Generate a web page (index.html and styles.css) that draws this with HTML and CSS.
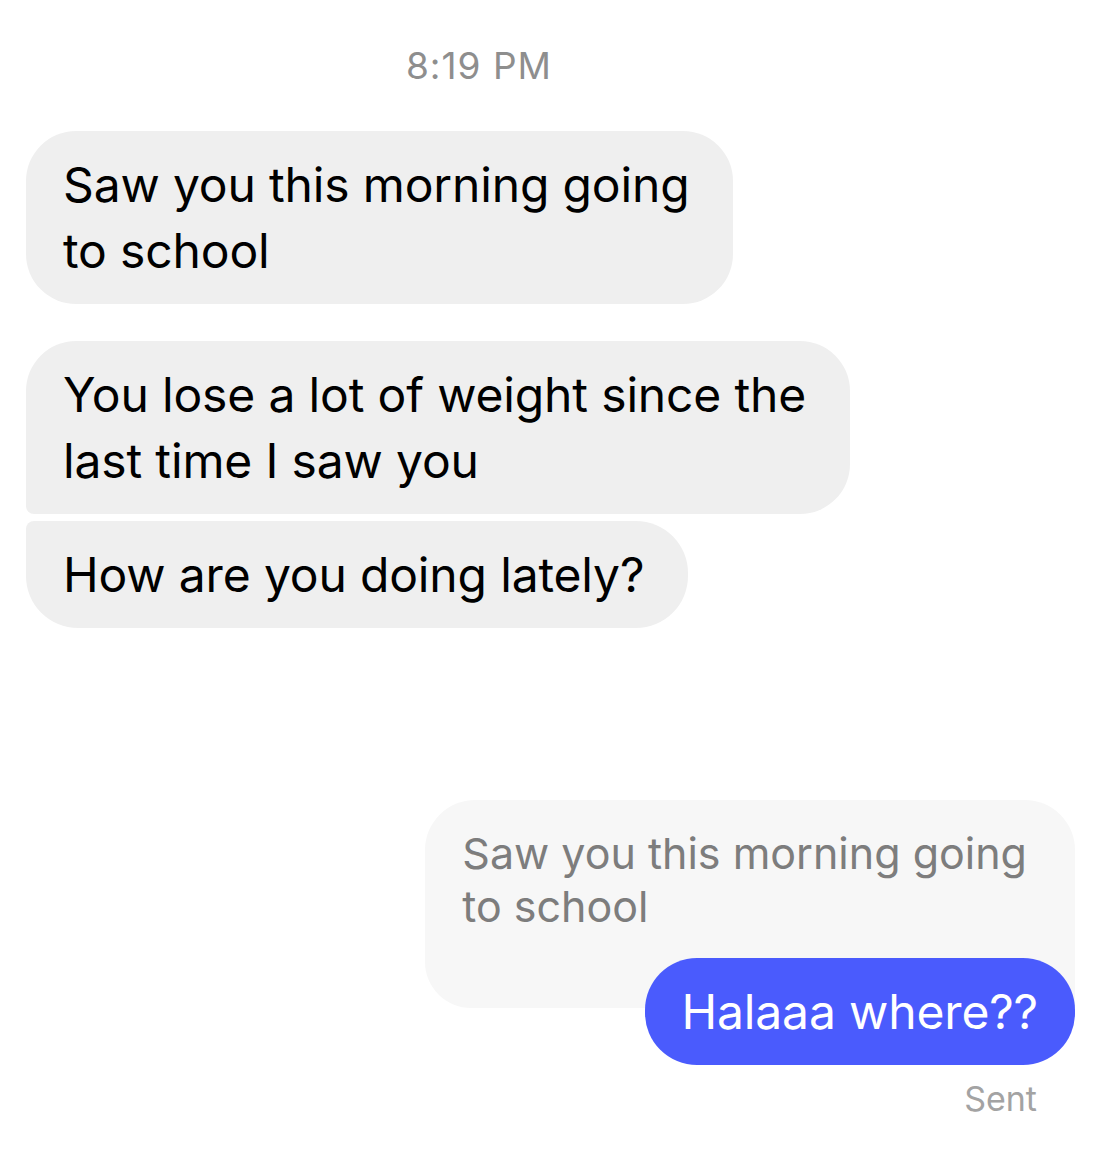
FILE: index.html
```html
<!DOCTYPE html>
<html lang="en">
<head>
<meta charset="utf-8">
<title>Chat</title>
<link rel="stylesheet" href="styles.css">
</head>
<body>
<main class="chat">
  <div class="timestamp">8:19 PM</div>

  <div class="bubble in single-group">Saw you this morning going<br>to school</div>

  <div class="group">
    <div class="bubble in first">You lose a lot of weight since the<br>last time I saw you</div>
    <div class="bubble in last">How are you doing lately?</div>
  </div>

  <div class="reply">
    <div class="quoted">Saw you this morning going<br>to school</div>
    <div class="bubble out">Halaaa where??</div>
  </div>
  <div class="status">Sent</div>
</main>
</body>
</html>
```

FILE: styles.css
```css
* { box-sizing: border-box; }
html, body {
  margin: 0;
  padding: 0;
  background: #ffffff;
}
body {
  font-family: Inter, "Noto Sans", "Liberation Sans", sans-serif;
  color: #000;
}
.chat {
  width: 1100px;
  padding: 44px 25px 0 26px;
  display: flex;
  flex-direction: column;
}
.timestamp {
  font-size: 37px;
  line-height: 44px;
  color: #8e8e8e;
  text-align: center;
  padding-right: 143px;
  letter-spacing: 1px;
}
.bubble {
  font-size: 48px;
  line-height: 66px;
  padding: 21px 44px 20px 37px;
  border-radius: 52px;
  align-self: flex-start;
  letter-spacing: -0.15px;
}
.bubble.in {
  background: #efefef;
  color: #000;
}
.single-group {
  margin-top: 43px;
  border-radius: 50px;
}
.group {
  margin-top: 37px;
  display: flex;
  flex-direction: column;
  gap: 7px;
}
.bubble.first {
  border-radius: 50px 50px 50px 8px;
}
.bubble.last {
  border-radius: 8px 52px 52px 52px;
}
.reply {
  margin-top: 172px;
  display: flex;
  flex-direction: column;
  align-items: flex-end;
}
.quoted {
  background: #f7f7f7;
  color: #7d7d7d;
  font-size: 43px;
  line-height: 53px;
  padding: 27px 48px 75px 37px;
  border-radius: 50px 50px 0 46px;
  letter-spacing: 0;
}
.bubble.out {
  align-self: flex-end;
  background: #4a5bfd;
  color: #fff;
  margin-top: -50px;
  position: relative;
  padding: 21px 37px 20px 37px;
}
.status {
  align-self: flex-end;
  margin-top: 14px;
  margin-right: 38px;
  font-size: 34px;
  line-height: 40px;
  color: #a3a3a3;
}
```
